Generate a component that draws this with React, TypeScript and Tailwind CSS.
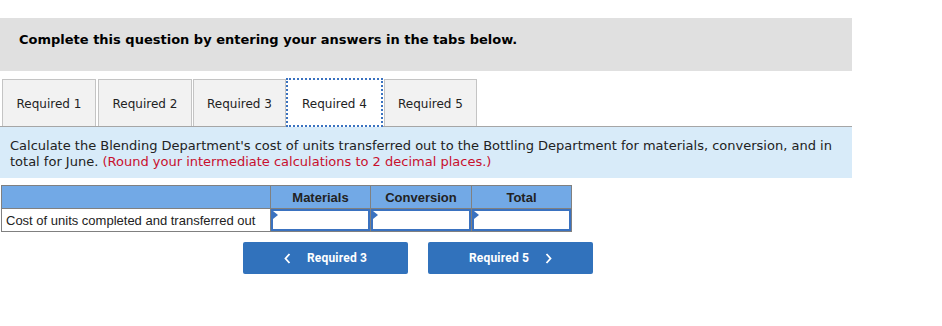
import React from 'react';

const tabs = ['Required 1', 'Required 2', 'Required 3', 'Required 4', 'Required 5'];
const cols = ['Materials', 'Conversion', 'Total'];

const verdana = "font-['DejaVu_Sans',Verdana,sans-serif]";

// inactive tab widths / gaps taken from the screenshot
const tabBox = ['w-[94px] mr-[2px]', 'w-[94px] mr-[1px]', 'w-[93px]', '', 'w-[93px] ml-px'];

function InputCell() {
  return (
    <td className="border border-[#808080] p-0 h-[23px]">
      <div className="relative h-[22px] border-2 border-[#3a72c0] bg-white">
        {/* little corner marker */}
        <div className="absolute left-0 top-0 w-0 h-0 border-t-[4px] border-b-[4px] border-l-[5px] border-t-transparent border-b-transparent border-l-[#3a72c0]" />
      </div>
    </td>
  );
}

export default function App() {
  return (
    <div className="w-[942px] h-[326px] bg-white pt-[18px]">
      <div className="w-[852px]">
        {/* Header */}
        <div className={`h-[53px] bg-[#e0e0e0] pt-[14px] pl-[19px] text-[13px] leading-[16px] font-bold text-black ${verdana}`}>
          Complete this question by entering your answers in the tabs below.
        </div>

        {/* Tabs */}
        <div className="mt-[8px] flex items-end pl-[2px] border-b border-[#a6a6a6] h-[48px]">
          {tabs.map((t, i) => {
            const active = i === 3;
            return (
              <div
                key={t}
                className={
                  active
                    ? `h-[49px] -mb-px w-[97px] pt-[2px] flex items-center justify-center bg-white border-2 border-dotted border-[#3a72c0] text-[12px] text-[#222] ${verdana}`
                    : `h-[47px] pt-[2px] flex items-center justify-center bg-[#f2f2f2] border border-b-0 border-[#c4c4c4] text-[12px] text-[#222] ${verdana} ${tabBox[i]}`
                }
              >
                {t}
              </div>
            );
          })}
        </div>

        {/* Instructions */}
        <div className={`bg-[#d8ebf9] pl-[10px] pr-[12px] pt-[11px] pb-[8px] text-[13px] leading-[16px] text-[#222] ${verdana}`}>
          Calculate the Blending Department's cost of units transferred out to the Bottling Department for materials, conversion, and in total for June.{' '}
          <span className="text-[#c8102e]">(Round your intermediate calculations to 2 decimal places.)</span>
        </div>
      </div>

      {/* Table */}
      <table className="mt-[7px] ml-px w-[571px] table-fixed border-collapse font-['Liberation_Sans',Arial,sans-serif] text-[13px]">
        <colgroup>
          <col className="w-[269px]" />
          <col className="w-[100px]" />
          <col className="w-[101px]" />
          <col className="w-[100px]" />
        </colgroup>
        <thead>
          <tr className="bg-[#72a9e6] h-[23px]">
            <th className="border border-[#808080]" />
            {cols.map((c) => (
              <th key={c} className="border border-[#808080] pt-px font-bold text-[#222] text-center">
                {c}
              </th>
            ))}
          </tr>
        </thead>
        <tbody>
          <tr className="h-[23px]">
            <td className="border border-[#808080] pl-[4px] pt-px text-[#222] whitespace-nowrap">
              Cost of units completed and transferred out
            </td>
            <InputCell />
            <InputCell />
            <InputCell />
          </tr>
        </tbody>
      </table>

      {/* Nav buttons */}
      <div className="mt-[10px] ml-[243px] flex gap-[20px] font-['Roboto',sans-serif]">
        <button className="w-[165px] h-[32px] rounded-[2px] bg-[#3172bc] text-white text-[12px] font-bold tracking-[0.2px] flex items-center justify-center gap-[16px]">
          <svg width="7" height="11" viewBox="0 0 7 11" fill="none">
            <path d="M5.5 1L1.5 5.5L5.5 10" stroke="white" strokeWidth="1.8" />
          </svg>
          <span>Required 3</span>
        </button>
        <button className="w-[165px] h-[32px] rounded-[2px] bg-[#3172bc] text-white text-[12px] font-bold tracking-[0.2px] flex items-center justify-center gap-[16px]">
          <span>Required 5</span>
          <svg width="7" height="11" viewBox="0 0 7 11" fill="none">
            <path d="M1.5 1L5.5 5.5L1.5 10" stroke="white" strokeWidth="1.8" />
          </svg>
        </button>
      </div>
    </div>
  );
}
